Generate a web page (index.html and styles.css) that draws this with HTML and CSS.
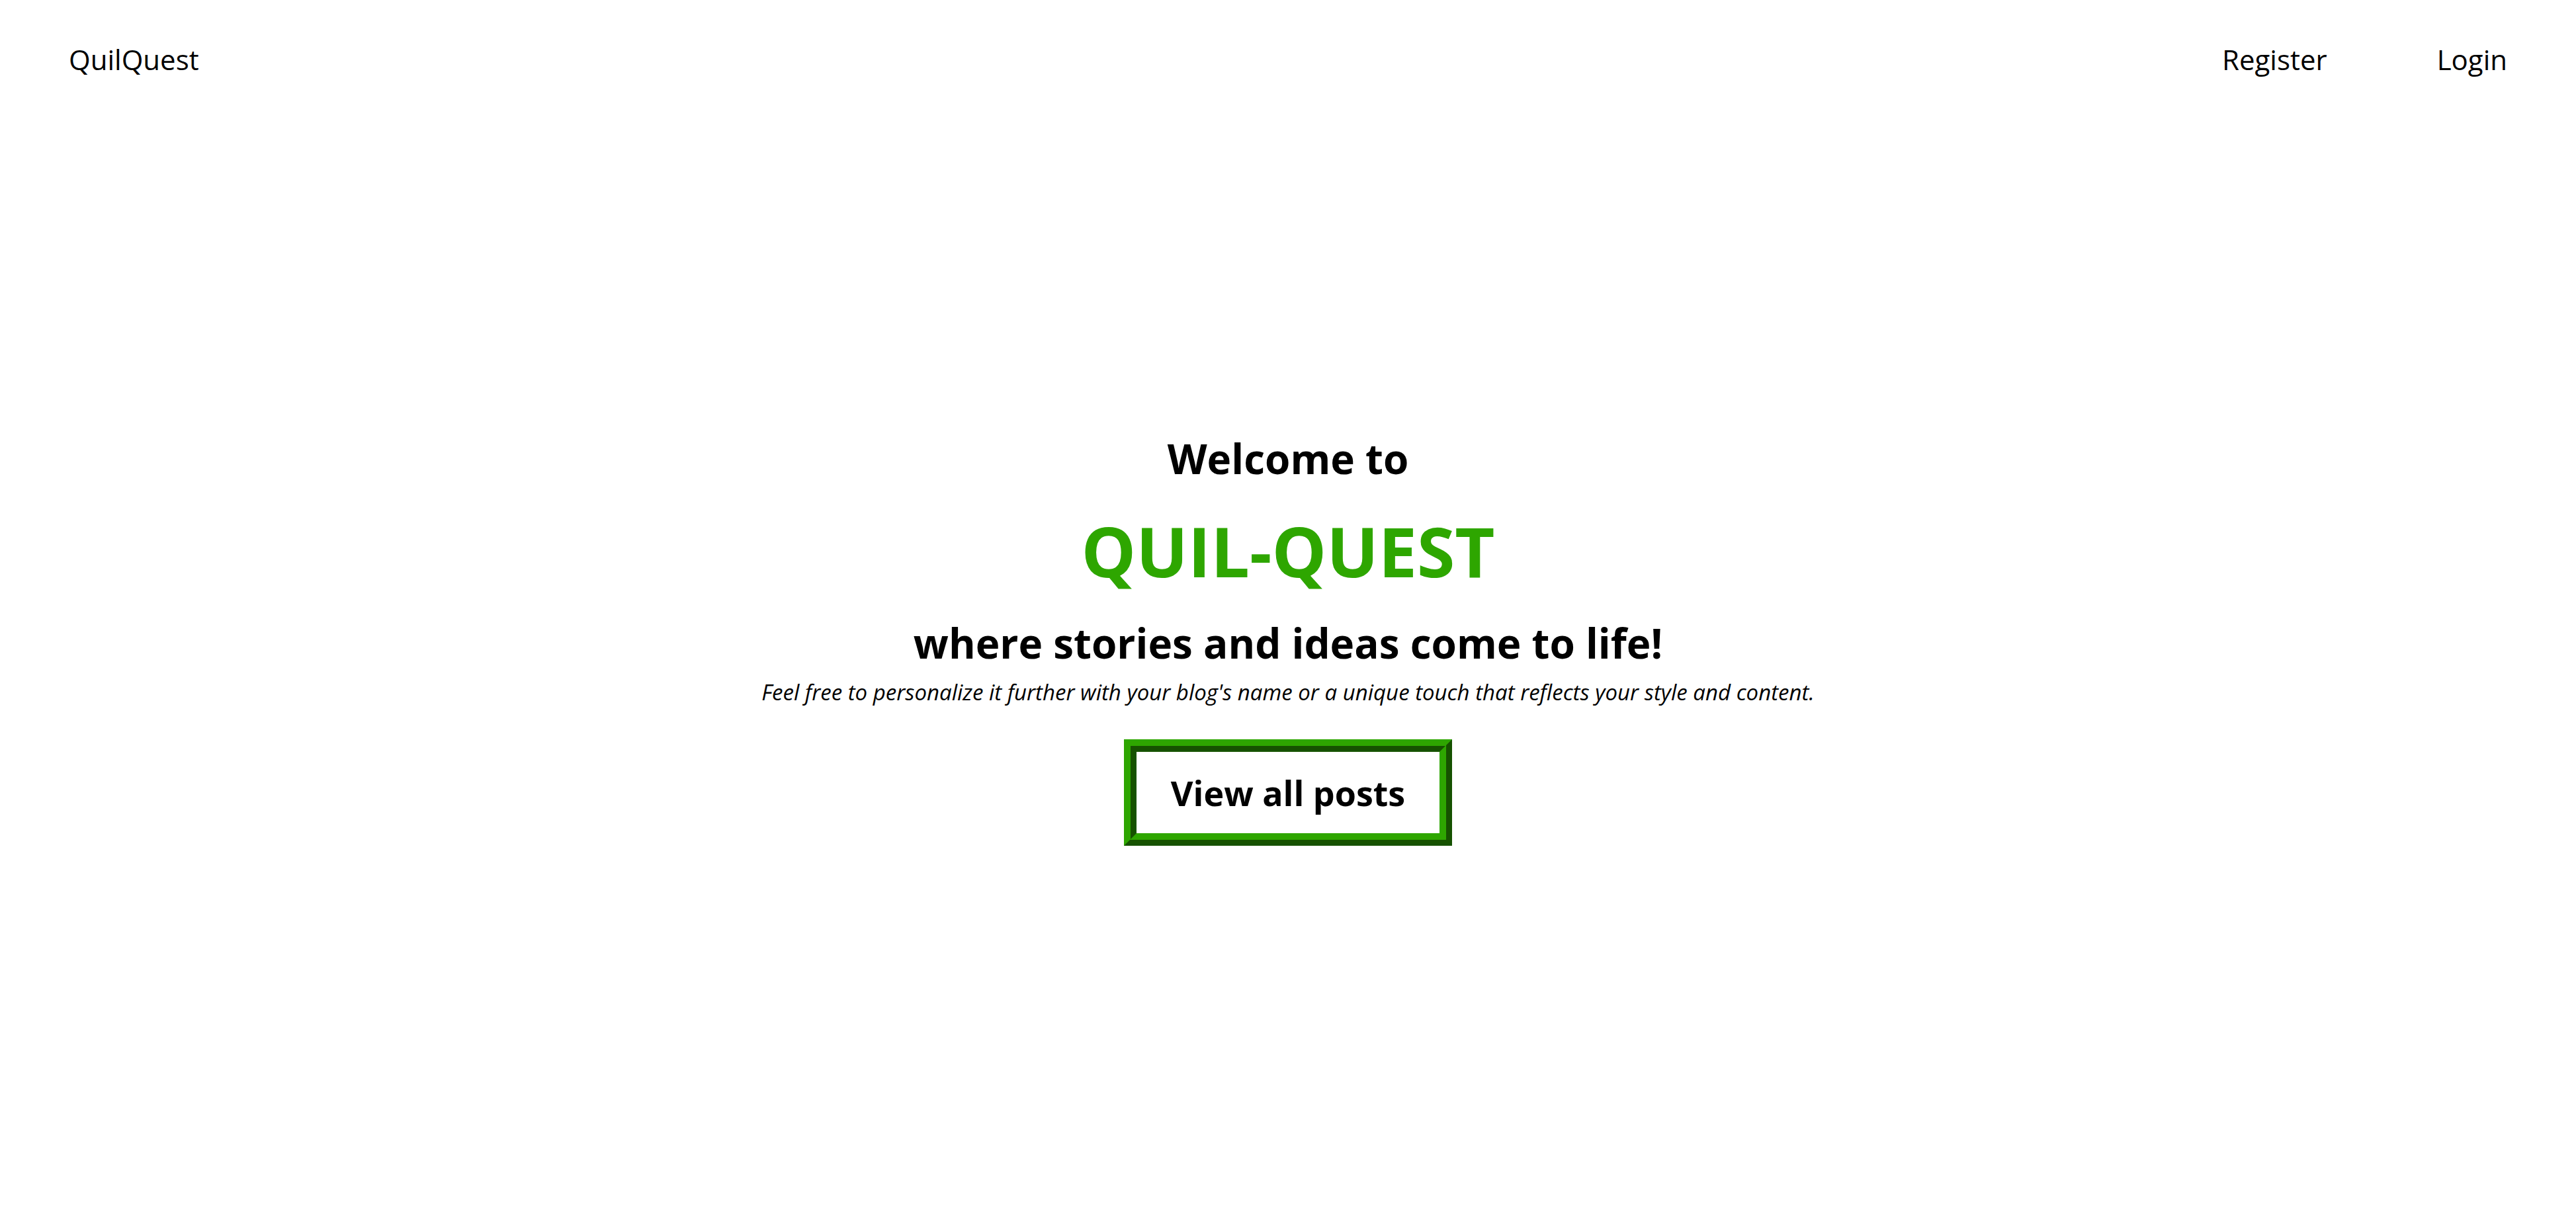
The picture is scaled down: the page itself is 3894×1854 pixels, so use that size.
FILE: index.html
```html
<!DOCTYPE html>
<html lang="en">
<head>
<meta charset="utf-8">
<title>QuilQuest</title>
<link rel="stylesheet" href="styles.css">
</head>
<body>
<header class="navbar">
  <a class="nav-link" href="#">QuilQuest</a>
  <nav class="nav-actions">
    <a class="nav-link" href="#register">Register</a>
    <a class="nav-link" href="#login">Login</a>
  </nav>
</header>
<main class="hero">
  <h2 class="hero-line">Welcome to</h2>
  <h1 class="hero-title">QUIL-QUEST</h1>
  <h2 class="hero-line">where stories and ideas come to life!</h2>
  <p class="hero-note">Feel free to personalize it further with your blog's name or a unique touch that reflects your style and content.</p>
  <button class="posts-button" type="button">View all posts</button>
</main>
</body>
</html>
```
FILE: styles.css
```css
* {
  box-sizing: border-box;
  margin: 0;
  padding: 0;
}

body {
  display: flex;
  flex-direction: column;
  min-height: 100vh;
  background: #fff;
  color: #000;
  font-family: "Open Sans", sans-serif;
}

.navbar {
  display: flex;
  justify-content: space-between;
  align-items: center;
  padding: 61px 104px;
  font-size: 42px;
  line-height: 58px;
}

.nav-actions {
  display: flex;
  gap: 166px;
}

.nav-link {
  color: inherit;
  text-decoration: none;
}

.hero {
  display: flex;
  flex: 1;
  flex-direction: column;
  align-items: center;
  justify-content: center;
  padding-bottom: 104px;
  text-align: center;
}

.hero-line {
  font-size: 62px;
  line-height: 85px;
}

.hero-title {
  margin: 26px 0;
  color: #2ea600;
  font-size: 104px;
  line-height: 142px;
}

.hero-note {
  margin-top: 10px;
  font-size: 33px;
  font-style: italic;
  line-height: 43px;
}

.posts-button {
  margin-top: 50px;
  padding: 26px 52px;
  border: 19px ridge #2ea600;
  background: #fff;
  color: #000;
  font-family: inherit;
  font-size: 52px;
  font-weight: 700;
  line-height: 71px;
}
```
